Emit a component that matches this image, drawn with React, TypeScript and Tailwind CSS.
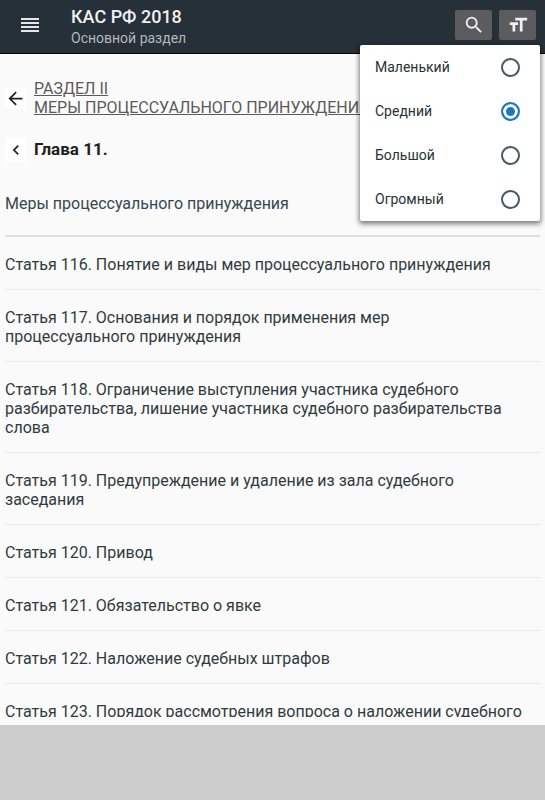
import { useState } from 'react';
import { MdArrowBack, MdChevronLeft, MdFormatSize, MdSearch } from 'react-icons/md';

const fontSizes = [
  { id: 'small', label: 'Маленький' },
  { id: 'medium', label: 'Средний' },
  { id: 'large', label: 'Большой' },
  { id: 'huge', label: 'Огромный' },
];

const articles = [
  { number: 116, title: 'Понятие и виды мер процессуального принуждения' },
  { number: 117, title: 'Основания и порядок применения мер\nпроцессуального принуждения' },
  { number: 118, title: 'Ограничение выступления участника судебного\nразбирательства, лишение участника судебного разбирательства\nслова' },
  { number: 119, title: 'Предупреждение и удаление из зала судебного\nзаседания' },
  { number: 120, title: 'Привод' },
  { number: 121, title: 'Обязательство о явке' },
  { number: 122, title: 'Наложение судебных штрафов' },
  { number: 123, title: 'Порядок рассмотрения вопроса о наложении судебного' },
];

function MenuIcon() {
  return (
    <svg width="18" height="14" viewBox="0 0 18 14" fill="currentColor" aria-hidden="true">
      <rect y="0" width="18" height="2" />
      <rect y="4" width="18" height="2" />
      <rect y="8" width="18" height="2" />
      <rect y="12" width="18" height="2" />
    </svg>
  );
}

function FontSizeMenu() {
  const [selected, setSelected] = useState('medium');

  return (
    <div
      role="radiogroup"
      aria-label="Размер шрифта"
      className="absolute top-[45px] right-[5px] z-10 w-[180px] rounded-xs bg-white shadow-[0_2px_5px_1px_rgba(0,0,0,0.5)]"
    >
      {fontSizes.map((size) => (
        <label key={size.id} className="flex h-11 items-center justify-between pr-5 pl-[15px] text-sm text-[#263238]">
          {size.label}
          <input
            type="radio"
            name="font-size"
            value={size.id}
            checked={selected === size.id}
            onChange={() => setSelected(size.id)}
            className="size-[19px] appearance-none rounded-full border-2 border-[#455a64] bg-white checked:border-[#1a78c2] checked:bg-[#1a78c2] checked:shadow-[inset_0_0_0_3px_white]"
          />
        </label>
      ))}
    </div>
  );
}

function Header() {
  return (
    <header className="relative flex h-[54px] shrink-0 items-center border-b border-black bg-[#263038] pr-[9px] pl-[21px]">
      <button type="button" aria-label="Меню" className="mr-8 -mt-1 text-[#e4e6e7]">
        <MenuIcon />
      </button>
      <div className="flex-1">
        <h1 className="text-lg leading-[22px] font-medium text-[#f0f1f2]">КАС РФ 2018</h1>
        <p className="text-sm leading-5 text-[#b4b8bb]">Основной раздел</p>
      </div>
      <div className="-mt-1 flex gap-[7px] text-[#f0f0f0]">
        <button type="button" aria-label="Поиск" className="flex h-[30px] w-[37px] items-center justify-center rounded-xs bg-[#5c5c5e]">
          <MdSearch size={22} />
        </button>
        <button type="button" aria-label="Размер шрифта" className="flex h-[30px] w-[37px] items-center justify-center rounded-xs bg-[#5c5c5e]">
          <MdFormatSize size={22} />
        </button>
      </div>
      <FontSizeMenu />
    </header>
  );
}

export default function App() {
  return (
    <div className="flex h-screen flex-col overflow-hidden bg-[#cccccc] font-['Roboto',sans-serif]">
      <Header />
      <main className="min-h-0 flex-1 bg-[#fafafa] px-[5px] pb-2">
        <div className="h-full overflow-hidden">
          <div className="flex items-center gap-2 pt-[25px]">
            <button type="button" aria-label="Назад" className="flex size-[21px] shrink-0 items-center justify-center bg-white text-[#212121]">
              <MdArrowBack size={21} />
            </button>
            <a href="#section" className="text-base leading-[19px] whitespace-pre text-[#5a5a5a] underline">
              {'РАЗДЕЛ II\nМЕРЫ ПРОЦЕССУАЛЬНОГО ПРИНУЖДЕНИЯ'}
            </a>
          </div>
          <div className="mt-5 flex items-center gap-2">
            <button type="button" aria-label="Предыдущая глава" className="flex h-[25px] w-[21px] items-center justify-center bg-white text-[#212121]">
              <MdChevronLeft size={20} />
            </button>
            <h2 className="text-[17px] leading-[25px] font-bold text-[#212121]">Глава 11.</h2>
          </div>
          <p className="mt-8 border-b-2 border-[#e0e0e0] pb-[22px] text-base leading-[19px] text-[#37474f]">
            Меры процессуального принуждения
          </p>
          <ul>
            {articles.map((article) => (
              <li key={article.number} className="border-b border-[#e8e8e8] pt-[18px] pb-[15px]">
                <a href={`#article-${article.number}`} className="block text-base leading-[19px] whitespace-pre-line text-[#303a40]">
                  {`Статья ${article.number}. ${article.title}`}
                </a>
              </li>
            ))}
          </ul>
        </div>
      </main>
      <footer className="h-[75px] shrink-0" />
    </div>
  );
}
